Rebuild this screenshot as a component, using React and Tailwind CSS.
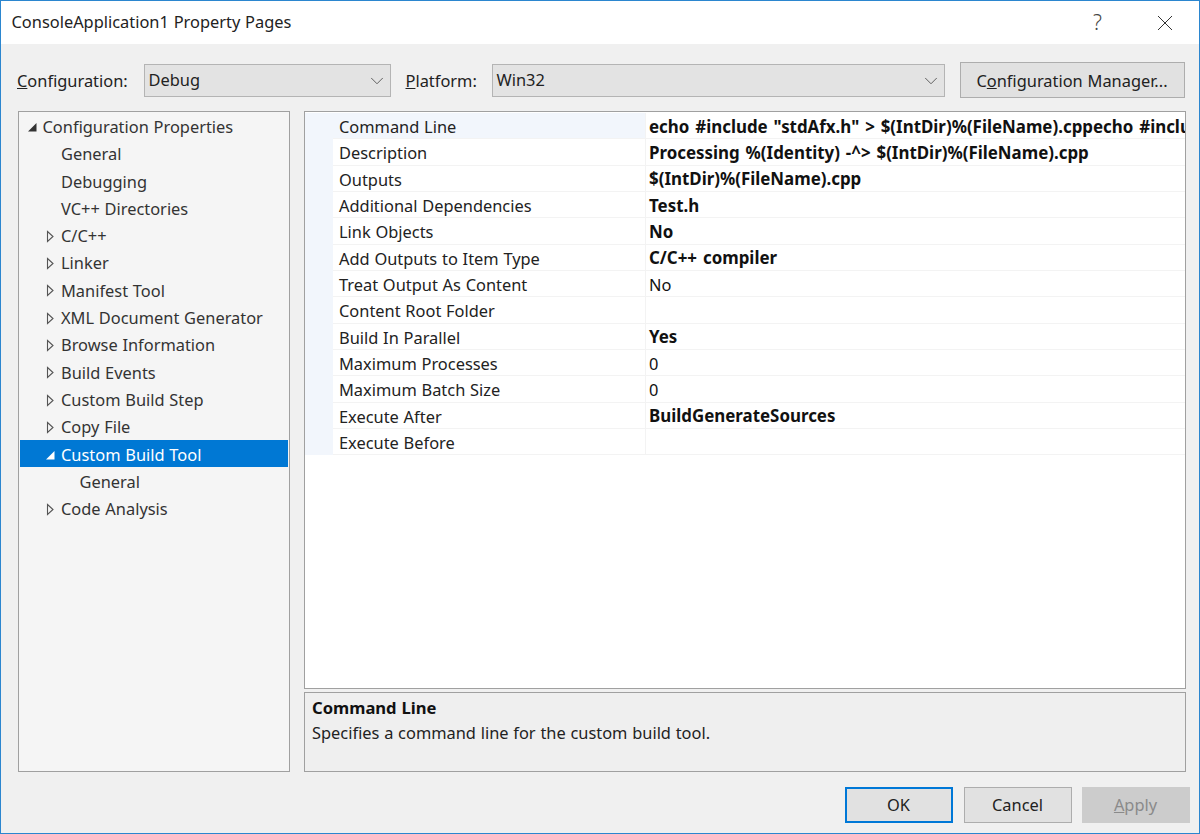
import { ChevronDown } from "lucide-react";

const font = { fontFamily: '"Noto Sans", sans-serif' };

const treeItems = [
  { label: "Configuration Properties", level: 0, arrow: "open" },
  { label: "General", level: 1 },
  { label: "Debugging", level: 1 },
  { label: "VC++ Directories", level: 1 },
  { label: "C/C++", level: 1, arrow: "closed" },
  { label: "Linker", level: 1, arrow: "closed" },
  { label: "Manifest Tool", level: 1, arrow: "closed" },
  { label: "XML Document Generator", level: 1, arrow: "closed" },
  { label: "Browse Information", level: 1, arrow: "closed" },
  { label: "Build Events", level: 1, arrow: "closed" },
  { label: "Custom Build Step", level: 1, arrow: "closed" },
  { label: "Copy File", level: 1, arrow: "closed" },
  { label: "Custom Build Tool", level: 1, arrow: "open", selected: true },
  { label: "General", level: 2 },
  { label: "Code Analysis", level: 1, arrow: "closed" },
];

const rows = [
  ["Command Line", 'echo #include "stdAfx.h" > $(IntDir)%(FileName).cppecho #include "stdAfx.h" > $(IntDir)', true],
  ["Description", "Processing %(Identity) -^> $(IntDir)%(FileName).cpp", true],
  ["Outputs", "$(IntDir)%(FileName).cpp", true],
  ["Additional Dependencies", "Test.h", true],
  ["Link Objects", "No", true],
  ["Add Outputs to Item Type", "C/C++ compiler", true],
  ["Treat Output As Content", "No", false],
  ["Content Root Folder", "", false],
  ["Build In Parallel", "Yes", true],
  ["Maximum Processes", "0", false],
  ["Maximum Batch Size", "0", false],
  ["Execute After", "BuildGenerateSources", true],
  ["Execute Before", "", false],
];

function Arrow({ type, selected }) {
  if (type === "open") {
    return (
      <svg width="10" height="10" viewBox="0 0 10 10" className="shrink-0">
        <path d="M9.5 1V9.5H1Z" fill={selected ? "#ffffff" : "#333333"} />
      </svg>
    );
  }
  return (
    <svg width="10" height="13" viewBox="0 0 10 13" className="shrink-0">
      <path d="M2.5 1.5 8 6.5 2.5 11.5Z" fill="none" stroke="#555555" strokeWidth="1.1" />
    </svg>
  );
}

function TreeRow({ item }) {
  return (
    <div
      className={`h-[27.3px] pt-[3px] flex items-center text-[16.4px] leading-none whitespace-nowrap ${
        item.selected ? "bg-[#0078d4] text-white" : "text-[#333333]"
      }`}
    >
      {item.arrow ? (
        <div className={`flex items-center ${item.level === 0 ? "pl-[7px] gap-[6px]" : "pl-[25px] gap-[6.5px]"}`}>
          <Arrow type={item.arrow} selected={item.selected} />
          <span>{item.label}</span>
        </div>
      ) : (
        <span className={item.level === 2 ? "pl-[60px]" : "pl-[41.5px]"}>{item.label}</span>
      )}
    </div>
  );
}

function GridRow({ name, value, bold, active }) {
  return (
    <div className="h-[26.33px] flex text-[16.4px] leading-none whitespace-nowrap">
      <div className="w-[28px] shrink-0 bg-[#f2f6fc]" />
      <div
        className={`w-[313px] shrink-0 pl-[6.5px] pt-[3px] flex items-center border-b border-r border-[#f3f3f3] text-[#222222] ${
          active ? "bg-[#f2f6fc]" : ""
        }`}
      >
        {name}
      </div>
      <div
        className={`flex-1 min-w-0 overflow-hidden pl-[3.5px] pt-[3px] flex items-center border-b border-[#f3f3f3] text-[#111111] ${
          bold ? "font-bold text-[16.9px] [word-spacing:1.5px]" : ""
        }`}
      >
        {value}
      </div>
    </div>
  );
}

function Button({ children, className = "" }) {
  return (
    <button className={`h-[36px] w-[108px] pt-[2px] text-[16.4px] leading-none flex items-center justify-center ${className}`}>
      {children}
    </button>
  );
}

export default function App() {
  return (
    <div
      style={font}
      className="w-[1200px] h-[834px] overflow-hidden flex flex-col border-t border-x-[1.5px] border-b-[1.5px] border-[#2b86cf] bg-[#f0f0f0] text-[#222222] [word-spacing:0.5px]"
    >
      {/* title bar */}
      <div className="h-[43px] shrink-0 bg-white flex items-center pl-[10.5px] pr-[26px] text-[16.4px]">
        <span className="flex-1 text-[#222222]">ConsoleApplication1 Property Pages</span>
        <span className="text-[21px] font-light text-[#444444] mr-[55px] leading-none">?</span>
        <svg width="16" height="16" viewBox="0 0 16 16" className="text-[#333333]">
          <path d="M1 1 15 15M15 1 1 15" fill="none" stroke="currentColor" strokeWidth="1" />
        </svg>
      </div>

      {/* configuration bar */}
      <div className="h-[67px] shrink-0 flex items-center pl-[16px] pr-[13px] text-[16.4px]">
        <span className="w-[126.5px] mt-[7px]">
          <span className="underline">C</span>onfiguration:
        </span>
        <div className="w-[247px] h-[33px] mt-[5px] pt-[1px] flex items-center justify-between pl-[4px] pr-[2px] bg-[#e3e3e3] border border-[#b4b4b4]">
          Debug
          <ChevronDown size={22} strokeWidth={0.9} className="text-[#444444]" />
        </div>
        <span className="w-[86px] ml-[15px] mt-[7px]">
          <span className="underline">P</span>latform:
        </span>
        <div className="w-[453px] h-[33px] mt-[5px] pt-[1px] flex items-center justify-between pl-[4px] pr-[2px] bg-[#e3e3e3] border border-[#b4b4b4]">
          Win32
          <ChevronDown size={22} strokeWidth={0.9} className="text-[#444444]" />
        </div>
        <div className="w-[225px] h-[36px] mt-[5px] ml-[15px] pt-[2px] flex items-center justify-center bg-[#e1e1e1] border border-[#adadad]">
          <span>
            C<span className="underline">o</span>nfiguration Manager...
          </span>
        </div>
      </div>

      {/* tree and grid */}
      <div className="flex-1 min-h-0 flex pl-[16.5px] pr-[13px] gap-[14px]">
        <div className="w-[272px] h-[661px] shrink-0 bg-[#f5f5f5] border border-[#a0a0a0] px-[1px]">
          {treeItems.map((item, i) => (
            <TreeRow key={i} item={item} />
          ))}
        </div>

        <div className="w-[882px] h-[661px] shrink-0 flex flex-col gap-[3px]">
          <div className="h-[578px] bg-white border border-[#a0a0a0] pt-[1px] overflow-hidden">
            {rows.map((r, i) => (
              <GridRow key={r[0]} name={r[0]} value={r[1]} bold={r[2]} active={i === 0} />
            ))}
          </div>
          <div className="h-[80px] bg-[#efefef] border border-[#a0a0a0] px-[7.5px] pt-[2px] text-[16.4px]">
            <div className="font-bold text-[16.6px] leading-[25px] text-[#111111]">Command Line</div>
            <div className="leading-[25px]">Specifies a command line for the custom build tool.</div>
          </div>
        </div>
      </div>

      {/* dialog buttons */}
      <div className="h-[61px] shrink-0 flex items-start justify-end gap-[10px] pt-[14.5px] pr-[9.5px]">
        <Button className="bg-[#e1e1e1] border-2 border-[#0078d7] mr-[1px]">OK</Button>
        <Button className="bg-[#e1e1e1] border border-[#adadad]">Cancel</Button>
        <Button className="bg-[#cccccc] text-[#8a8a8a]">
          <span>
            <span className="underline">A</span>pply
          </span>
        </Button>
      </div>
    </div>
  );
}
